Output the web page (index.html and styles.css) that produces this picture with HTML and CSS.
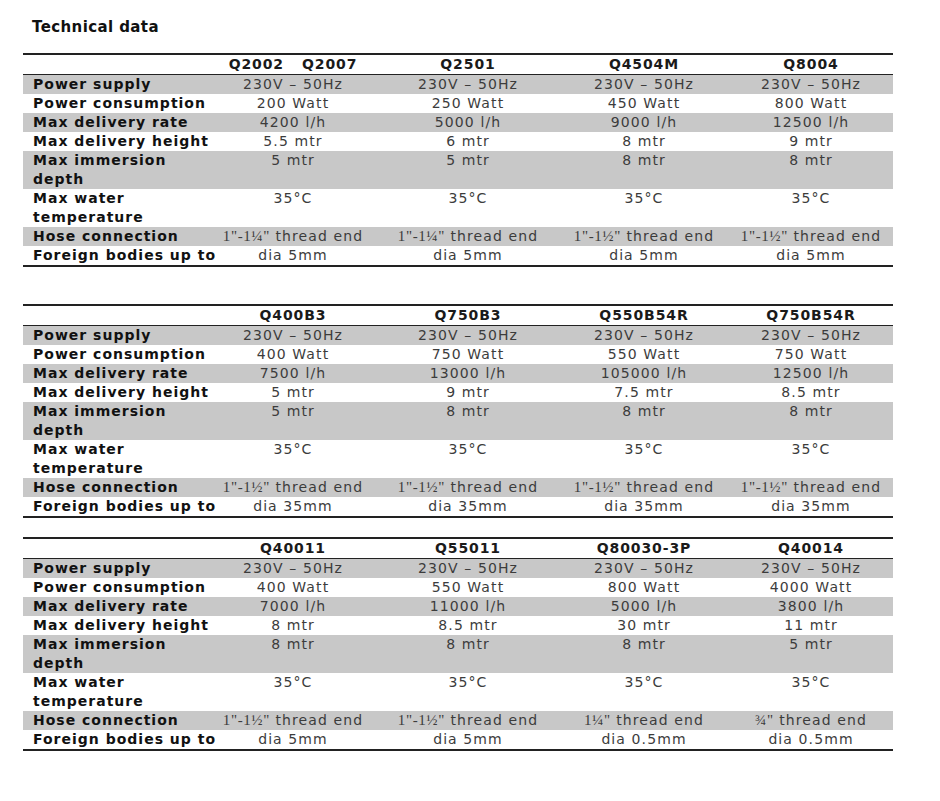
FILE: index.html
```html
<!DOCTYPE html>
<html>
<head>
<meta charset="utf-8">
<link rel="stylesheet" href="styles.css">
</head>
<body>
<div class="page">
  <h1 class="title">Technical data</h1>

  <table class="spec spec-first">
    <colgroup><col class="c0"><col class="c1"><col class="c2"><col class="c3"><col class="c4"></colgroup>
    <thead>
      <tr><th></th><th>Q2002<span class="gap"></span>Q2007</th><th>Q2501</th><th>Q4504M</th><th>Q8004</th></tr>
    </thead>
    <tbody>
      <tr class="g"><td class="l">Power supply</td><td>230V – 50Hz</td><td>230V – 50Hz</td><td>230V – 50Hz</td><td>230V – 50Hz</td></tr>
      <tr><td class="l">Power consumption</td><td>200 Watt</td><td>250 Watt</td><td>450 Watt</td><td>800 Watt</td></tr>
      <tr class="g"><td class="l">Max delivery rate</td><td>4200 l/h</td><td>5000 l/h</td><td>9000 l/h</td><td>12500 l/h</td></tr>
      <tr><td class="l">Max delivery height</td><td>5.5 mtr</td><td>6 mtr</td><td>8 mtr</td><td>9 mtr</td></tr>
      <tr class="g"><td class="l">Max immersion<br>depth</td><td>5 mtr</td><td>5 mtr</td><td>8 mtr</td><td>8 mtr</td></tr>
      <tr><td class="l">Max water<br>temperature</td><td>35°C</td><td>35°C</td><td>35°C</td><td>35°C</td></tr>
      <tr class="g"><td class="l">Hose connection</td><td><span class="q">1"-1¼"</span> thread end</td><td><span class="q">1"-1¼"</span> thread end</td><td><span class="q">1"-1½"</span> thread end</td><td><span class="q">1"-1½"</span> thread end</td></tr>
      <tr><td class="l">Foreign bodies up to</td><td>dia 5mm</td><td>dia 5mm</td><td>dia 5mm</td><td>dia 5mm</td></tr>
    </tbody>
  </table>

  <table class="spec spec-second">
    <colgroup><col class="c0"><col class="c1"><col class="c2"><col class="c3"><col class="c4"></colgroup>
    <thead>
      <tr><th></th><th>Q400B3</th><th>Q750B3</th><th>Q550B54R</th><th>Q750B54R</th></tr>
    </thead>
    <tbody>
      <tr class="g"><td class="l">Power supply</td><td>230V – 50Hz</td><td>230V – 50Hz</td><td>230V – 50Hz</td><td>230V – 50Hz</td></tr>
      <tr><td class="l">Power consumption</td><td>400 Watt</td><td>750 Watt</td><td>550 Watt</td><td>750 Watt</td></tr>
      <tr class="g"><td class="l">Max delivery rate</td><td>7500 l/h</td><td>13000 l/h</td><td>105000 l/h</td><td>12500 l/h</td></tr>
      <tr><td class="l">Max delivery height</td><td>5 mtr</td><td>9 mtr</td><td>7.5 mtr</td><td>8.5 mtr</td></tr>
      <tr class="g"><td class="l">Max immersion<br>depth</td><td>5 mtr</td><td>8 mtr</td><td>8 mtr</td><td>8 mtr</td></tr>
      <tr><td class="l">Max water<br>temperature</td><td>35°C</td><td>35°C</td><td>35°C</td><td>35°C</td></tr>
      <tr class="g"><td class="l">Hose connection</td><td><span class="q">1"-1½"</span> thread end</td><td><span class="q">1"-1½"</span> thread end</td><td><span class="q">1"-1½"</span> thread end</td><td><span class="q">1"-1½"</span> thread end</td></tr>
      <tr><td class="l">Foreign bodies up to</td><td>dia 35mm</td><td>dia 35mm</td><td>dia 35mm</td><td>dia 35mm</td></tr>
    </tbody>
  </table>

  <table class="spec spec-third">
    <colgroup><col class="c0"><col class="c1"><col class="c2"><col class="c3"><col class="c4"></colgroup>
    <thead>
      <tr><th></th><th>Q40011</th><th>Q55011</th><th>Q80030-3P</th><th>Q40014</th></tr>
    </thead>
    <tbody>
      <tr class="g"><td class="l">Power supply</td><td>230V – 50Hz</td><td>230V – 50Hz</td><td>230V – 50Hz</td><td>230V – 50Hz</td></tr>
      <tr><td class="l">Power consumption</td><td>400 Watt</td><td>550 Watt</td><td>800 Watt</td><td>4000 Watt</td></tr>
      <tr class="g"><td class="l">Max delivery rate</td><td>7000 l/h</td><td>11000 l/h</td><td>5000 l/h</td><td>3800 l/h</td></tr>
      <tr><td class="l">Max delivery height</td><td>8 mtr</td><td>8.5 mtr</td><td>30 mtr</td><td>11 mtr</td></tr>
      <tr class="g"><td class="l">Max immersion<br>depth</td><td>8 mtr</td><td>8 mtr</td><td>8 mtr</td><td>5 mtr</td></tr>
      <tr><td class="l">Max water<br>temperature</td><td>35°C</td><td>35°C</td><td>35°C</td><td>35°C</td></tr>
      <tr class="g"><td class="l">Hose connection</td><td><span class="q">1"-1½"</span> thread end</td><td><span class="q">1"-1½"</span> thread end</td><td><span class="q">1¼"</span> thread end</td><td><span class="q">¾"</span> thread end</td></tr>
      <tr><td class="l">Foreign bodies up to</td><td>dia 5mm</td><td>dia 5mm</td><td>dia 0.5mm</td><td>dia 0.5mm</td></tr>
    </tbody>
  </table>
</div>
</body>
</html>
```

FILE: styles.css
```css
html, body {
  margin: 0;
  padding: 0;
  background: #ffffff;
}

.page {
  padding: 19px 0 0 23px;
  width: 870px;
  font-family: "DejaVu Sans", Verdana, sans-serif;
}

.title {
  margin: 0 0 18px 9px;
  font-size: 15px;
  line-height: 16px;
  letter-spacing: 0.4px;
  font-weight: bold;
  color: #111;
}

.spec {
  width: 870px;
  border-collapse: collapse;
  table-layout: fixed;
  border-top: 2px solid #222;
  border-bottom: 2px solid #222;
}

.spec-second { margin-top: 37px; }
.spec-third { margin-top: 19px; }

.c0 { width: 186px; }
.c1 { width: 168px; }
.c2 { width: 182px; }
.c3 { width: 170px; }
.c4 { width: 164px; }

.spec th {
  height: 19px;
  padding: 0;
  font-size: 14px;
  line-height: 19px;
  letter-spacing: 0.9px;
  font-weight: bold;
  color: #1a1a1a;
  text-align: center;
  border-bottom: 1px solid #222;
  vertical-align: bottom;
}

.gap {
  display: inline-block;
  width: 18px;
}

.spec td {
  padding: 0;
  height: 19px;
  font-size: 14px;
  line-height: 19px;
  letter-spacing: 1.1px;
  color: #3c3c3c;
  text-align: center;
  vertical-align: top;
  white-space: nowrap;
}

.spec td.l {
  padding-left: 10px;
  text-align: left;
  font-weight: bold;
  letter-spacing: 1px;
  color: #111;
}

.spec tr.g td { background: #c8c8c8; }

.q {
  font-family: "Liberation Serif", "Times New Roman", serif;
  font-size: 15px;
  letter-spacing: 0.6px;
}
```
